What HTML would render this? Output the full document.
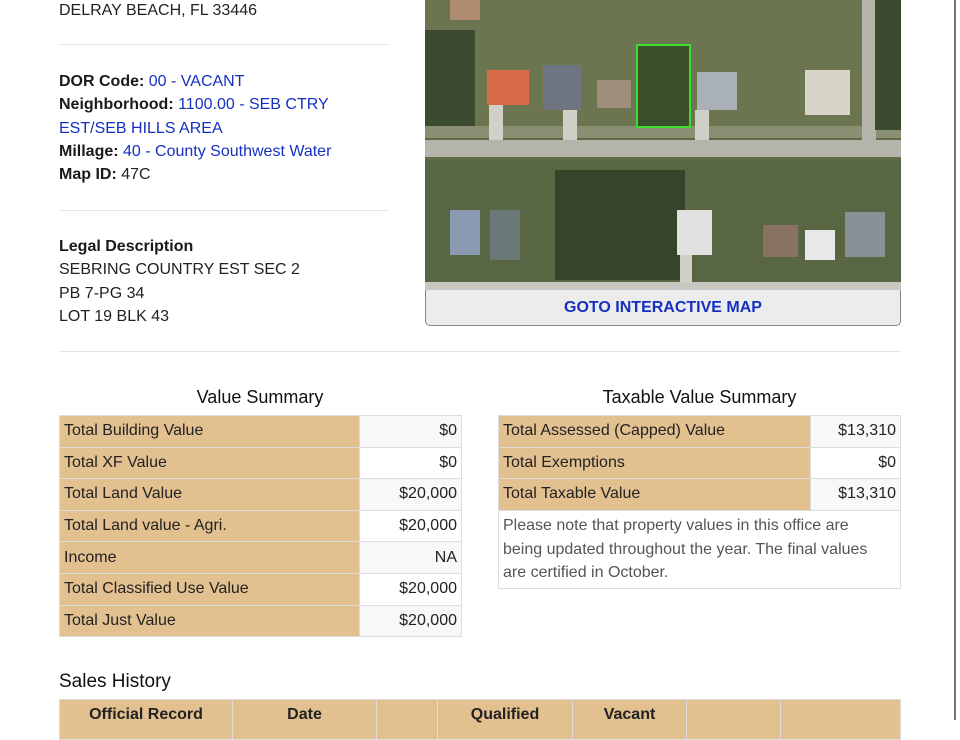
<!DOCTYPE html>
<html><head><meta charset="utf-8"><style>
body{margin:0;width:960px;height:720px;overflow:hidden;background:#fff;font-family:"Liberation Sans",Arial,sans-serif;color:#222;position:relative}
.a{position:absolute}
.t{font-size:16px;line-height:23.3px;white-space:nowrap}
.b{color:#1a1a1a;font-weight:bold}
.l{color:#1530c0}
hr{position:absolute;border:0;border-top:1px solid #e5e5e5;margin:0}
table{position:absolute;border-collapse:collapse;font-size:16px}
td{border:1px solid #ddd;height:31.6px;padding:0 4px;box-sizing:border-box}
td.k{background:#e3c08f;color:#222}
td.v{text-align:right;background:#f8f8f8}
tr.w td.v{background:#fff}
h3{position:absolute;margin:0;font-weight:normal;font-size:18px;text-align:center;color:#111}
</style></head><body>
<div class="a t" style="left:59px;top:-1px">DELRAY BEACH, FL 33446</div>
<hr style="left:59px;top:44px;width:330px">
<div class="a t" style="left:59px;top:70px"><span class="b">DOR Code:</span> <span class="l">00 - VACANT</span><br><span class="b">Neighborhood:</span> <span class="l">1100.00 - SEB CTRY</span><br><span class="l">EST/SEB HILLS AREA</span><br><span class="b">Millage:</span> <span class="l">40 - County Southwest Water</span><br><span class="b">Map ID:</span> 47C</div>
<hr style="left:59px;top:210px;width:330px">
<div class="a t" style="left:59px;top:235px"><span class="b">Legal Description</span><br>SEBRING COUNTRY EST SEC 2<br>PB 7-PG 34<br>LOT 19 BLK 43</div>

<svg class="a" style="left:425px;top:0" width="476" height="290" viewBox="0 0 476 290">
<rect width="476" height="290" fill="#5f6c48"/>
<rect x="0" y="0" width="476" height="130" fill="#6b7550"/>
<rect x="0" y="160" width="476" height="125" fill="#586644"/>
<rect x="130" y="170" width="130" height="110" fill="#34452c"/>
<rect x="0" y="30" width="50" height="100" fill="#3c4a30"/>
<rect x="0" y="126" width="476" height="12" fill="#8a8e72"/>
<rect x="0" y="140" width="476" height="17" fill="#b4b4aa"/>
<rect x="0" y="282" width="476" height="8" fill="#c8c8c0"/>
<rect x="437" y="0" width="14" height="140" fill="#b4b4aa"/>
<rect x="450" y="0" width="26" height="130" fill="#3a4a30"/>
<rect x="62" y="70" width="42" height="35" fill="#d86a48"/>
<rect x="118" y="65" width="38" height="45" fill="#6e7480"/>
<rect x="172" y="80" width="34" height="28" fill="#a08c7a"/>
<rect x="212" y="45" width="53" height="82" fill="#3b4e2c" stroke="#3ddd30" stroke-width="2"/>
<rect x="272" y="72" width="40" height="38" fill="#aab0b8"/>
<rect x="380" y="70" width="45" height="45" fill="#d8d4c8"/>
<rect x="25" y="0" width="30" height="20" fill="#b08c70"/>
<rect x="25" y="210" width="30" height="45" fill="#8a9ab0"/>
<rect x="65" y="210" width="30" height="50" fill="#6a7878"/>
<rect x="252" y="210" width="35" height="45" fill="#e0e0e0"/>
<rect x="338" y="225" width="35" height="32" fill="#8a7260"/>
<rect x="380" y="230" width="30" height="30" fill="#e8e8e8"/>
<rect x="420" y="212" width="40" height="45" fill="#8a9098"/>
<rect x="64" y="105" width="14" height="35" fill="#d0d0c8"/>
<rect x="138" y="110" width="14" height="30" fill="#d0d0c8"/>
<rect x="270" y="110" width="14" height="30" fill="#d0d0c8"/>
<rect x="255" y="255" width="12" height="28" fill="#d0d0c8"/>
</svg>
<div class="a" style="left:425px;top:290px;width:474px;height:35px;background:#ececec;border:1px solid #888;border-top:0;border-radius:0 0 5px 5px;text-align:center;line-height:36px;font-weight:bold;font-size:16px;color:#1530c0">GOTO INTERACTIVE MAP</div>
<div class="a" style="left:954px;top:0;width:2px;height:720px;background:#777"></div>

<hr style="left:59px;top:351px;width:842px">
<h3 style="left:59px;top:387px;width:402px">Value Summary</h3>
<table style="left:59px;top:415px;width:403px">
<tr><td class="k" style="width:300px">Total Building Value</td><td class="v">$0</td></tr>
<tr class="w"><td class="k">Total XF Value</td><td class="v">$0</td></tr>
<tr><td class="k">Total Land Value</td><td class="v">$20,000</td></tr>
<tr class="w"><td class="k">Total Land value - Agri.</td><td class="v">$20,000</td></tr>
<tr><td class="k">Income</td><td class="v">NA</td></tr>
<tr class="w"><td class="k">Total Classified Use Value</td><td class="v">$20,000</td></tr>
<tr><td class="k">Total Just Value</td><td class="v">$20,000</td></tr>
</table>
<h3 style="left:498px;top:387px;width:403px">Taxable Value Summary</h3>
<table style="left:498px;top:415px;width:403px">
<tr><td class="k" style="width:312px">Total Assessed (Capped) Value</td><td class="v">$13,310</td></tr>
<tr class="w"><td class="k">Total Exemptions</td><td class="v">$0</td></tr>
<tr><td class="k">Total Taxable Value</td><td class="v">$13,310</td></tr>
<tr><td colspan="2" style="height:78px;color:#555;line-height:23.3px;background:#fff;padding-right:20px">Please note that property values in this office are<br>being updated throughout the year. The final values<br>are certified in October.</td></tr>
</table>
<div class="a" style="left:59px;top:671px;font-size:19px;color:#111">Sales History</div>
<table style="left:59px;top:699px;width:842px">
<tr style="font-weight:bold;text-align:center"><td class="k" style="width:173px;height:40px;vertical-align:top;padding-top:6px;text-align:center">Official Record</td><td class="k" style="width:144px;vertical-align:top;padding-top:6px;text-align:center">Date</td><td class="k" style="width:61px"></td><td class="k" style="width:135px;vertical-align:top;padding-top:6px;text-align:center">Qualified</td><td class="k" style="width:114px;vertical-align:top;padding-top:6px;text-align:center">Vacant</td><td class="k" style="width:94px"></td><td class="k"></td></tr>
</table>
</body></html>
